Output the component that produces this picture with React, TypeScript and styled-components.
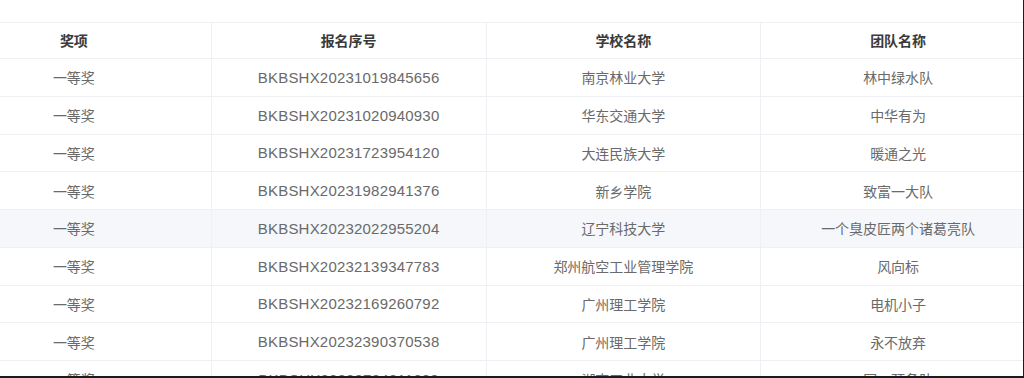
import styled, { createGlobalStyle } from "styled-components";

const GlobalStyle = createGlobalStyle`
  html, body {
    margin: 0;
    padding: 0;
    background: #ffffff;
  }
  body {
    font-family: "Liberation Sans", "Noto Sans CJK SC", sans-serif;
  }
`;

const Frame = styled.div`
  width: 1024px;
  height: 378px;
  box-sizing: border-box;
  padding-top: 22px;
  overflow: hidden;
  background: #ffffff;
  border-right: 1px solid #1c1c1c;
  border-bottom: 2px solid #1c1c1c;
`;

const Scroller = styled.div`
  margin-left: -64px;
  width: 1100px;
`;

const Table = styled.table`
  width: 1100px;
  table-layout: fixed;
  border-collapse: collapse;
  font-family: "Liberation Sans", "Noto Sans CJK SC", sans-serif;
  font-size: 14px;
`;

const HeadCell = styled.th`
  height: 36px;
  padding: 0 10px 2px;
  box-sizing: border-box;
  border: 1px solid #eef0f4;
  color: #3a3a3a;
  font-weight: 700;
  font-size: 14px;
  text-align: center;
  background: #ffffff;
`;

const Row = styled.tr<{ $hover?: boolean }>`
  background: ${(p) => (p.$hover ? "#f5f7fa" : "#ffffff")};
`;

const Cell = styled.td`
  height: 37.75px;
  padding: 0 10px;
  box-sizing: border-box;
  border: 1px solid #eef0f4;
  color: #6a6a6a;
  text-align: center;
  white-space: nowrap;
  overflow: hidden;
`;

const CodeCell = styled(Cell)`
  font-size: 15px;
  letter-spacing: 0.2px;
`;

type Award = {
  level: string;
  code: string;
  school: string;
  team: string;
};

const awards: Award[] = [
  { level: "一等奖", code: "BKBSHX20231019845656", school: "南京林业大学", team: "林中绿水队" },
  { level: "一等奖", code: "BKBSHX20231020940930", school: "华东交通大学", team: "中华有为" },
  { level: "一等奖", code: "BKBSHX20231723954120", school: "大连民族大学", team: "暖通之光" },
  { level: "一等奖", code: "BKBSHX20231982941376", school: "新乡学院", team: "致富一大队" },
  { level: "一等奖", code: "BKBSHX20232022955204", school: "辽宁科技大学", team: "一个臭皮匠两个诸葛亮队" },
  { level: "一等奖", code: "BKBSHX20232139347783", school: "郑州航空工业管理学院", team: "风向标" },
  { level: "一等奖", code: "BKBSHX20232169260792", school: "广州理工学院", team: "电机小子" },
  { level: "一等奖", code: "BKBSHX20232390370538", school: "广州理工学院", team: "永不放弃" },
  { level: "一等奖", code: "BKBSHX20232784211630", school: "湖南工业大学", team: "同一预备队" },
];

export default function App() {
  const hoverIndex = 4;

  return (
    <>
      <GlobalStyle />
      <Frame>
        <Scroller>
          <Table>
            <thead>
              <tr>
                <HeadCell>奖项</HeadCell>
                <HeadCell>报名序号</HeadCell>
                <HeadCell>学校名称</HeadCell>
                <HeadCell>团队名称</HeadCell>
              </tr>
            </thead>
            <tbody>
              {awards.map((a, i) => (
                <Row key={a.code} $hover={i === hoverIndex}>
                  <Cell>{a.level}</Cell>
                  <CodeCell>{a.code}</CodeCell>
                  <Cell>{a.school}</Cell>
                  <Cell>{a.team}</Cell>
                </Row>
              ))}
            </tbody>
          </Table>
        </Scroller>
      </Frame>
    </>
  );
}
